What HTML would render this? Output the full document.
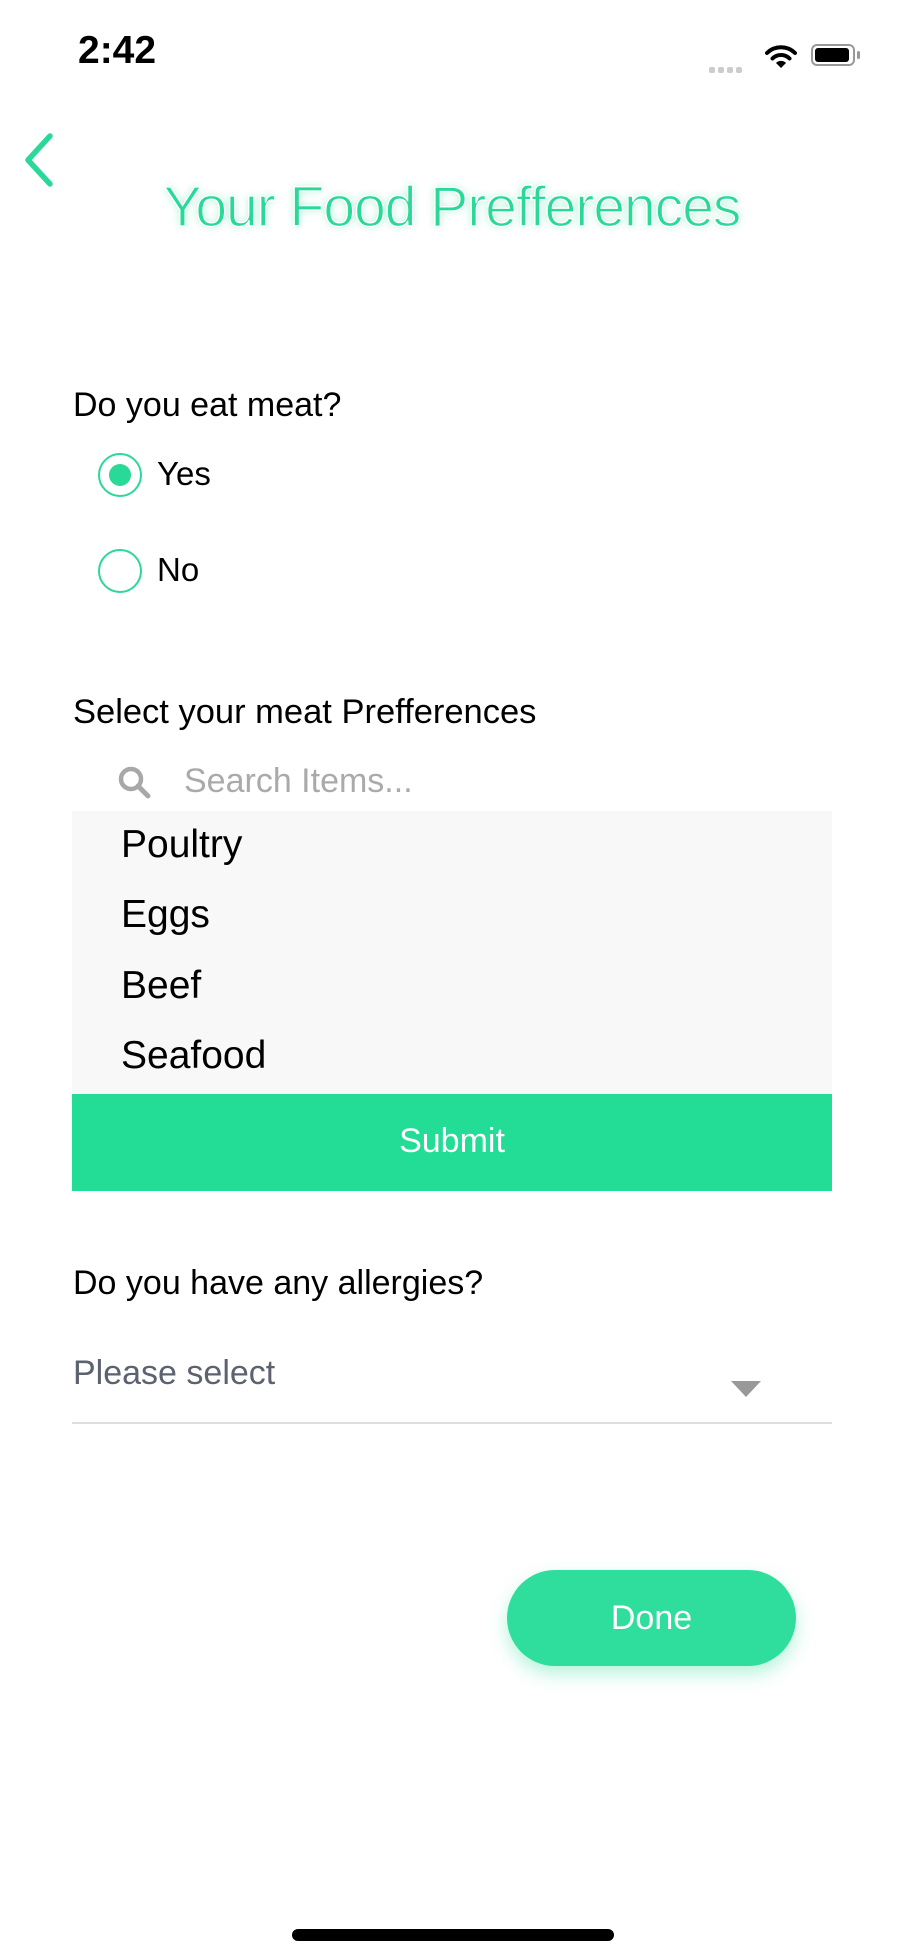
<!DOCTYPE html>
<html><head><meta charset="utf-8"><style>
body{margin:0;width:904px;height:1958px;background:#fff;font-family:"Liberation Sans",sans-serif;position:relative;overflow:hidden}
.a{position:absolute;white-space:nowrap}
.r{position:absolute;width:44px;height:44px;border:2.5px solid #2ad898;border-radius:50%;box-sizing:border-box}
</style></head><body>
<div class="a" style="left:78px;top:29px;font-size:39px;font-weight:bold;color:#000">2:42</div>
<div class="a" style="left:709px;top:60px">
<span style="display:inline-block;width:6px;height:6px;background:#ccc;border-radius:2px;margin-right:3px"></span><span style="display:inline-block;width:6px;height:6px;background:#ccc;border-radius:2px;margin-right:3px"></span><span style="display:inline-block;width:6px;height:6px;background:#ccc;border-radius:2px;margin-right:3px"></span><span style="display:inline-block;width:6px;height:6px;background:#ccc;border-radius:2px"></span></div>
<svg class="a" style="left:764px;top:42px" width="34" height="28" viewBox="0 0 34 28"><path d="M3 11 A20 20 0 0 1 31 11" fill="none" stroke="#000" stroke-width="4" stroke-linecap="round"/><path d="M8.5 16.5 A12 12 0 0 1 25.5 16.5" fill="none" stroke="#000" stroke-width="4" stroke-linecap="round"/><path d="M17 26 L12 21 A7 7 0 0 1 22 21Z" fill="#000"/></svg>
<div class="a" style="left:811px;top:44px;width:44px;height:22px;border:2px solid #999;border-radius:6px;box-sizing:border-box"></div>
<div class="a" style="left:815px;top:48px;width:34px;height:14px;background:#000;border-radius:3px"></div>
<div class="a" style="left:857px;top:51px;width:3px;height:8px;background:#999;border-radius:2px"></div>
<svg class="a" style="left:18px;top:132px" width="40" height="56"><path d="M32 4 L10 28 L32 52" fill="none" stroke="#2ad898" stroke-width="5.5" stroke-linecap="round" stroke-linejoin="round"/></svg>
<div class="a" style="left:0;width:904px;text-align:center;top:174px;font-size:57px;color:#2ad898;letter-spacing:-1px;text-shadow:0 0 8px rgba(42,216,152,.4);-webkit-text-stroke:1.3px #fff;paint-order:normal">Your Food Prefferences</div>
<div class="a" style="left:73px;top:386px;font-size:34px;color:#000">Do you eat meat?</div>
<div class="r" style="left:98px;top:453px"></div>
<div class="a" style="left:109px;top:464px;width:22px;height:22px;border-radius:50%;background:#2ad898"></div>
<div class="a" style="left:157px;top:455px;font-size:33px">Yes</div>
<div class="r" style="left:98px;top:549px"></div>
<div class="a" style="left:157px;top:551px;font-size:33px">No</div>
<div class="a" style="left:73px;top:693px;font-size:34.5px">Select your meat Prefferences</div>
<svg class="a" style="left:116px;top:764px" width="38" height="38"><circle cx="15" cy="15" r="10" fill="none" stroke="#a8a8a8" stroke-width="4.5"/><path d="M22 22 L32 32" stroke="#a8a8a8" stroke-width="5" stroke-linecap="round"/></svg>
<div class="a" style="left:184px;top:762px;font-size:34px;color:#aaa">Search Items...</div>
<div class="a" style="left:72px;top:811px;width:760px;height:284px;background:#f8f8f8"></div>
<div class="a" style="left:121px;top:823px;font-size:39px">Poultry</div>
<div class="a" style="left:121px;top:893px;font-size:39px">Eggs</div>
<div class="a" style="left:121px;top:964px;font-size:39px">Beef</div>
<div class="a" style="left:121px;top:1034px;font-size:39px">Seafood</div>
<div class="a" style="left:72px;top:1094px;width:760px;height:97px;background:#23dc96;color:#fff;font-size:34px;text-align:center;line-height:95px">Submit</div>
<div class="a" style="left:73px;top:1264px;font-size:34px">Do you have any allergies?</div>
<div class="a" style="left:73px;top:1354px;font-size:34px;color:#5c6270">Please select</div>
<svg class="a" style="left:731px;top:1381px" width="32" height="18"><path d="M0 0 H30 L15 16Z" fill="#999"/></svg>
<div class="a" style="left:72px;top:1422px;width:760px;height:1.5px;background:#ddd"></div>
<div class="a" style="left:507px;top:1570px;width:289px;height:96px;border-radius:48px;background:#2fde9c;box-shadow:0 8px 18px rgba(47,222,156,.35);color:#fff;font-size:34px;text-align:center;line-height:96px">Done</div>
<div class="a" style="left:292px;top:1929px;width:322px;height:12px;border-radius:6px;background:#000"></div>
</body></html>
